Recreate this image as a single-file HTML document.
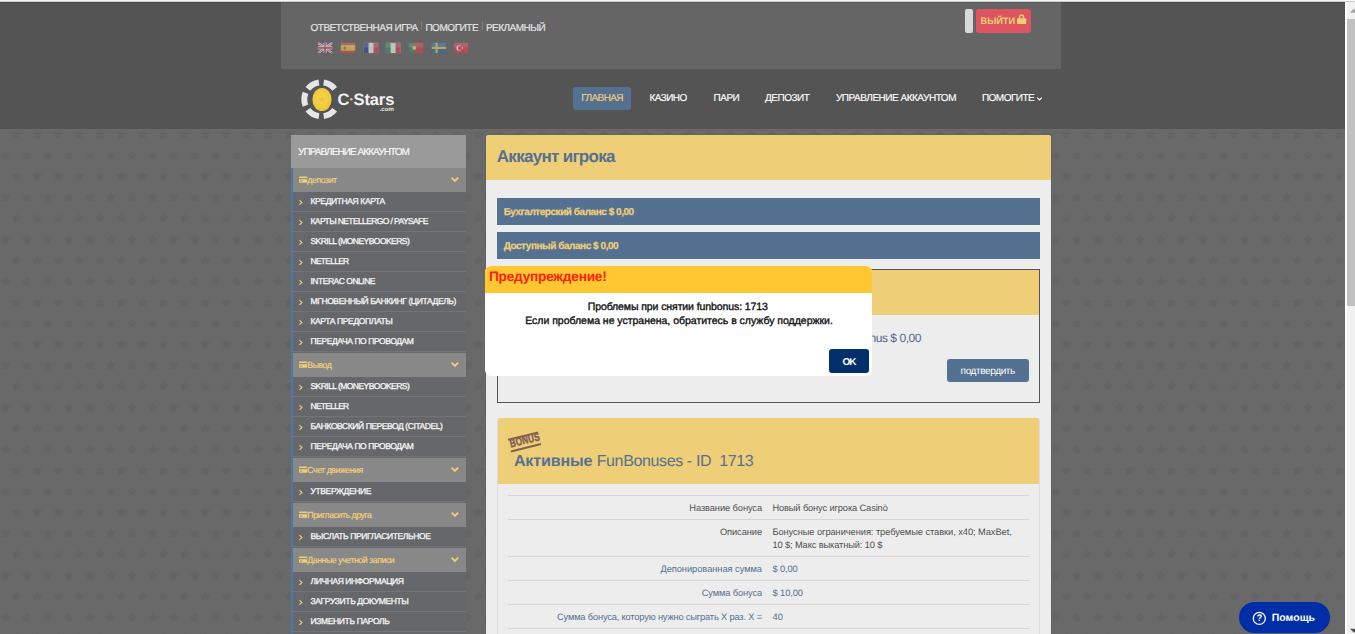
<!DOCTYPE html>
<html><head><meta charset="utf-8"><title>C-Stars</title>
<style>
html,body{margin:0;padding:0;}
body{width:1355px;height:634px;overflow:hidden;position:relative;background:#696969;font-family:'Liberation Sans',sans-serif;text-rendering:geometricPrecision;}
.b{position:absolute;}
.t{position:absolute;white-space:pre;}
</style></head><body>
<svg class="b" style="left:0;top:129px" width="1345" height="505" viewBox="0 129 1345 505"><defs><pattern id="st" x="5.8" y="-1.9" width="21" height="42" patternUnits="userSpaceOnUse"><polygon fill="#646464" points="10.50,4.50 12.20,8.15 16.21,8.65 13.26,11.40 14.03,15.35 10.50,13.40 6.97,15.35 7.74,11.40 4.79,8.65 8.80,8.15"/><polygon fill="#646464" points="0.00,25.50 1.70,29.15 5.71,29.65 2.76,32.40 3.53,36.35 0.00,34.40 -3.53,36.35 -2.76,32.40 -5.71,29.65 -1.70,29.15"/><polygon fill="#646464" points="21.00,25.50 22.70,29.15 26.71,29.65 23.76,32.40 24.53,36.35 21.00,34.40 17.47,36.35 18.24,32.40 15.29,29.65 19.30,29.15"/></pattern></defs><rect x="0" y="129" width="1345" height="505" fill="url(#st)"/></svg>
<!--BG-->
<div class="b" style="left:0px;top:2px;width:1345px;height:127px;background:#545454;"></div>
<div class="b" style="left:281px;top:2px;width:780px;height:67px;background:#656565;"></div>
<div class="b" style="left:421.4px;top:21px;width:1px;height:8.6px;background:#7e7e7e;"></div>
<div class="b" style="left:481.6px;top:21px;width:1px;height:8.6px;background:#7e7e7e;"></div>
<div class="b" style="left:965px;top:9px;width:8px;height:24px;background:#d9d9d9;border-radius:2px;"></div>
<div class="b" style="left:976px;top:9px;width:55px;height:24px;background:#de5562;border-radius:3px;"></div>
<div class="b" style="left:573px;top:87px;width:58px;height:23px;background:#547192;border-radius:3px;"></div>
<div class="b" style="left:291px;top:135px;width:175px;height:33px;background:#9a9a9a;"></div>
<div class="b" style="left:291px;top:168px;width:175px;height:24px;background:#888888;border-left:2px solid #4f77a6;box-sizing:border-box;"></div>
<div class="b" style="left:291px;top:192px;width:175px;height:20px;background:#65676b;border-left:2px solid #4f77a6;border-bottom:1px solid #72747a;box-sizing:border-box;"></div>
<div class="b" style="left:291px;top:212px;width:175px;height:20px;background:#65676b;border-left:2px solid #4f77a6;border-bottom:1px solid #72747a;box-sizing:border-box;"></div>
<div class="b" style="left:291px;top:232px;width:175px;height:20px;background:#65676b;border-left:2px solid #4f77a6;border-bottom:1px solid #72747a;box-sizing:border-box;"></div>
<div class="b" style="left:291px;top:252px;width:175px;height:20px;background:#65676b;border-left:2px solid #4f77a6;border-bottom:1px solid #72747a;box-sizing:border-box;"></div>
<div class="b" style="left:291px;top:272px;width:175px;height:20px;background:#65676b;border-left:2px solid #4f77a6;border-bottom:1px solid #72747a;box-sizing:border-box;"></div>
<div class="b" style="left:291px;top:292px;width:175px;height:20px;background:#65676b;border-left:2px solid #4f77a6;border-bottom:1px solid #72747a;box-sizing:border-box;"></div>
<div class="b" style="left:291px;top:312px;width:175px;height:20px;background:#65676b;border-left:2px solid #4f77a6;border-bottom:1px solid #72747a;box-sizing:border-box;"></div>
<div class="b" style="left:291px;top:332px;width:175px;height:20px;background:#65676b;border-left:2px solid #4f77a6;border-bottom:1px solid #72747a;box-sizing:border-box;"></div>
<div class="b" style="left:291px;top:353px;width:175px;height:24px;background:#888888;border-left:2px solid #4f77a6;box-sizing:border-box;"></div>
<div class="b" style="left:291px;top:377px;width:175px;height:20px;background:#65676b;border-left:2px solid #4f77a6;border-bottom:1px solid #72747a;box-sizing:border-box;"></div>
<div class="b" style="left:291px;top:397px;width:175px;height:20px;background:#65676b;border-left:2px solid #4f77a6;border-bottom:1px solid #72747a;box-sizing:border-box;"></div>
<div class="b" style="left:291px;top:417px;width:175px;height:20px;background:#65676b;border-left:2px solid #4f77a6;border-bottom:1px solid #72747a;box-sizing:border-box;"></div>
<div class="b" style="left:291px;top:437px;width:175px;height:20px;background:#65676b;border-left:2px solid #4f77a6;border-bottom:1px solid #72747a;box-sizing:border-box;"></div>
<div class="b" style="left:291px;top:458px;width:175px;height:24px;background:#888888;border-left:2px solid #4f77a6;box-sizing:border-box;"></div>
<div class="b" style="left:291px;top:482px;width:175px;height:20px;background:#65676b;border-left:2px solid #4f77a6;border-bottom:1px solid #72747a;box-sizing:border-box;"></div>
<div class="b" style="left:291px;top:503px;width:175px;height:24px;background:#888888;border-left:2px solid #4f77a6;box-sizing:border-box;"></div>
<div class="b" style="left:291px;top:527px;width:175px;height:20px;background:#65676b;border-left:2px solid #4f77a6;border-bottom:1px solid #72747a;box-sizing:border-box;"></div>
<div class="b" style="left:291px;top:548px;width:175px;height:24px;background:#888888;border-left:2px solid #4f77a6;box-sizing:border-box;"></div>
<div class="b" style="left:291px;top:572px;width:175px;height:20px;background:#65676b;border-left:2px solid #4f77a6;border-bottom:1px solid #72747a;box-sizing:border-box;"></div>
<div class="b" style="left:291px;top:592px;width:175px;height:20px;background:#65676b;border-left:2px solid #4f77a6;border-bottom:1px solid #72747a;box-sizing:border-box;"></div>
<div class="b" style="left:291px;top:612px;width:175px;height:20px;background:#65676b;border-left:2px solid #4f77a6;border-bottom:1px solid #72747a;box-sizing:border-box;"></div>
<div class="b" style="left:291px;top:632px;width:175px;height:20px;background:#65676b;border-left:2px solid #4f77a6;border-bottom:1px solid #72747a;box-sizing:border-box;"></div>
<div class="b" style="left:486px;top:135px;width:565px;height:520px;background:#ededed;border-radius:3px;box-shadow:0 0 0 1px rgba(0,0,0,0.06);"></div>
<div class="b" style="left:486px;top:135px;width:565px;height:45px;background:#efce78;border-radius:3px 3px 0 0;"></div>
<div class="b" style="left:497px;top:198px;width:543px;height:27px;background:#547192;"></div>
<div class="b" style="left:497px;top:232px;width:543px;height:27px;background:#547192;"></div>
<div class="b" style="left:497px;top:269px;width:543px;height:134px;background:#ededed;border:1px solid #555;box-sizing:border-box;"></div>
<div class="b" style="left:498px;top:270px;width:541px;height:45px;background:#efce78;"></div>
<div class="b" style="left:947px;top:359px;width:82px;height:23px;background:#547192;border-radius:3px;"></div>
<div class="b" style="left:497px;top:418px;width:543px;height:240px;background:#ededed;border:1px solid #dcdcdc;box-sizing:border-box;border-radius:3px;"></div>
<div class="b" style="left:498px;top:418px;width:541px;height:66px;background:#efce78;border-radius:3px 3px 0 0;"></div>
<div class="b" style="left:508px;top:495px;width:521px;height:1px;background:#d6d6d6;"></div>
<div class="b" style="left:508px;top:519px;width:521px;height:1px;background:#d6d6d6;"></div>
<div class="b" style="left:508px;top:556px;width:521px;height:1px;background:#d6d6d6;"></div>
<div class="b" style="left:508px;top:580px;width:521px;height:1px;background:#d6d6d6;"></div>
<div class="b" style="left:508px;top:604px;width:521px;height:1px;background:#d6d6d6;"></div>
<div class="b" style="left:508px;top:628px;width:521px;height:1px;background:#d6d6d6;"></div>
<div class="b" style="left:485px;top:266px;width:387px;height:110px;background:#ffffff;border-radius:6px;z-index:5;"></div>
<div class="b" style="left:485px;top:266px;width:387px;height:26.5px;background:#ffc832;border-radius:6px 6px 0 0;z-index:5;"></div>
<div class="b" style="left:829px;top:349px;width:40px;height:23.5px;background:#03306a;border-radius:3px;z-index:5;"></div>
<div class="b" style="left:1239px;top:602px;width:91px;height:31px;background:#002ea6;border-radius:16px;"></div>
<div class="b" style="left:1345px;top:0px;width:2px;height:634px;background:#ffffff;"></div>
<div class="b" style="left:1347px;top:0px;width:8px;height:634px;background:#f1f1f1;"></div>
<div class="b" style="left:1347px;top:19px;width:8px;height:287px;background:#c1c1c1;"></div>
<div class="b" style="left:0px;top:0px;width:1355px;height:1px;background:#f8f8f8;"></div>
<div class="b" style="left:0px;top:1px;width:1355px;height:1px;background:#cdcdcd;"></div>
<div class="b" style="left:0px;top:2px;width:1345px;height:1px;background:rgba(0,0,0,0.10);"></div>
<!--ICONS-->
<svg class="b" style="left:0;top:0" width="1355" height="634" viewBox="0 0 1355 634"><path d="M305.54 105.67 A17.00 17.00 0 0 1 305.54 92.93" fill="none" stroke="#e6e6e6" stroke-width="6"/><path d="M307.90 88.83 A17.00 17.00 0 0 1 318.93 82.47" fill="none" stroke="#e6e6e6" stroke-width="6"/><path d="M323.67 82.47 A17.00 17.00 0 0 1 334.70 88.83" fill="none" stroke="#e6e6e6" stroke-width="6"/><path d="M334.70 109.77 A17.00 17.00 0 0 1 323.67 116.13" fill="none" stroke="#e6e6e6" stroke-width="6"/><path d="M318.93 116.13 A17.00 17.00 0 0 1 307.90 109.77" fill="none" stroke="#e6e6e6" stroke-width="6"/><defs><radialGradient id="cg" cx="0.45" cy="0.45" r="0.6"><stop offset="0" stop-color="#f6d84a"/><stop offset="1" stop-color="#eec23a"/></radialGradient></defs><ellipse cx="322" cy="99.5" rx="9.6" ry="11.6" fill="url(#cg)"/><polygon points="322,95.6 322.9,98.3 325.7,98.3 323.4,100 324.3,102.7 322,101 319.7,102.7 320.6,100 318.3,98.3 321.1,98.3" fill="#e6b93a" opacity="0.75"/><circle cx="351.3" cy="99.2" r="1.3" fill="#efce4a"/><svg x="317.7" y="42.6" width="14.8" height="10.7" viewBox="0 0 16 11" preserveAspectRatio="none" opacity="0.6"><rect width="16" height="11" fill="#3a4a9a"/><path d="M0 0L16 11M16 0L0 11" stroke="#fff" stroke-width="2.4"/><path d="M0 0L16 11M16 0L0 11" stroke="#e0444f" stroke-width="0.9"/><path d="M8 0V11M0 5.5H16" stroke="#fff" stroke-width="3.4"/><path d="M8 0V11M0 5.5H16" stroke="#e0444f" stroke-width="1.8"/><rect width="16" height="5" fill="#fff" opacity="0.18"/></svg><svg x="340.6" y="42.6" width="14.8" height="10.7" viewBox="0 0 16 11" preserveAspectRatio="none" opacity="0.6"><rect width="16" height="11" fill="#dd4a4a"/><rect y="2.7" width="16" height="5.6" fill="#f5d63a"/><rect x="3.2" y="4" width="2.4" height="3" fill="#c8683a"/><rect width="16" height="5" fill="#fff" opacity="0.18"/></svg><svg x="363.6" y="42.6" width="14.8" height="10.7" viewBox="0 0 16 11" preserveAspectRatio="none" opacity="0.6"><rect width="16" height="11" fill="#fff"/><rect width="5.3" height="11" fill="#38449a"/><rect x="10.7" width="5.3" height="11" fill="#dd4455"/><rect width="16" height="5" fill="#fff" opacity="0.18"/></svg><svg x="385.7" y="42.6" width="14.8" height="10.7" viewBox="0 0 16 11" preserveAspectRatio="none" opacity="0.6"><rect width="16" height="11" fill="#fff"/><rect width="5.3" height="11" fill="#2f9a5a"/><rect x="10.7" width="5.3" height="11" fill="#dd4455"/><rect width="16" height="5" fill="#fff" opacity="0.18"/></svg><svg x="408.7" y="42.6" width="14.8" height="10.7" viewBox="0 0 16 11" preserveAspectRatio="none" opacity="0.6"><rect width="16" height="11" fill="#dd4048"/><rect width="6" height="11" fill="#2f9a5a"/><circle cx="6" cy="5.5" r="2.2" fill="#f0d24a"/><circle cx="6" cy="5.5" r="1.1" fill="#eee"/><rect width="16" height="5" fill="#fff" opacity="0.18"/></svg><svg x="431.5" y="42.6" width="14.8" height="10.7" viewBox="0 0 16 11" preserveAspectRatio="none" opacity="0.6"><rect width="16" height="11" fill="#2f6fb5"/><path d="M5.5 0V11M0 5.5H16" stroke="#f5d63a" stroke-width="2.2"/><rect width="16" height="5" fill="#fff" opacity="0.18"/></svg><svg x="453.5" y="42.6" width="14.8" height="10.7" viewBox="0 0 16 11" preserveAspectRatio="none" opacity="0.6"><rect width="16" height="11" fill="#e0404a"/><circle cx="6" cy="5.5" r="2.8" fill="#fff"/><circle cx="6.9" cy="5.5" r="2.2" fill="#e0404a"/><circle cx="9.6" cy="5.5" r="0.8" fill="#fff"/><rect width="16" height="5" fill="#fff" opacity="0.18"/></svg><rect x="1017" y="18.3" width="9.2" height="5.8" rx="0.8" fill="#efce6f"/><path d="M1019.7 18.6V16.8A1.9 1.9 0 0 1 1023.5 16.8V18.6" fill="none" stroke="#efce6f" stroke-width="1.5"/><path d="M1037.2 97.6L1039.5 100L1041.8 97.6" fill="none" stroke="#fff" stroke-width="1.1"/><g fill="#efce78"><rect x="299" y="176.6" width="8.3" height="6.2" rx="0.8"/></g><rect x="299" y="178.1" width="8.3" height="1.1" fill="#888"/><rect x="300" y="180.6" width="2.4" height="0.9" fill="#888"/><path d="M451.6 177.6L454.9 180.9L458.2 177.6" fill="none" stroke="#efce78" stroke-width="1.9" stroke-linejoin="miter"/><path d="M299.4 200.1L302 202.5L299.4 204.9" fill="none" stroke="#efce78" stroke-width="1.1"/><path d="M299.4 220.1L302 222.5L299.4 224.9" fill="none" stroke="#efce78" stroke-width="1.1"/><path d="M299.4 240.1L302 242.5L299.4 244.9" fill="none" stroke="#efce78" stroke-width="1.1"/><path d="M299.4 260.1L302 262.5L299.4 264.9" fill="none" stroke="#efce78" stroke-width="1.1"/><path d="M299.4 280.1L302 282.5L299.4 284.9" fill="none" stroke="#efce78" stroke-width="1.1"/><path d="M299.4 300.1L302 302.5L299.4 304.9" fill="none" stroke="#efce78" stroke-width="1.1"/><path d="M299.4 320.1L302 322.5L299.4 324.9" fill="none" stroke="#efce78" stroke-width="1.1"/><path d="M299.4 340.1L302 342.5L299.4 344.9" fill="none" stroke="#efce78" stroke-width="1.1"/><g fill="#efce78"><rect x="299" y="361.6" width="8.3" height="6.2" rx="0.8"/></g><rect x="299" y="363.1" width="8.3" height="1.1" fill="#888"/><rect x="300" y="365.6" width="2.4" height="0.9" fill="#888"/><path d="M451.6 362.6L454.9 365.9L458.2 362.6" fill="none" stroke="#efce78" stroke-width="1.9" stroke-linejoin="miter"/><path d="M299.4 385.1L302 387.5L299.4 389.9" fill="none" stroke="#efce78" stroke-width="1.1"/><path d="M299.4 405.1L302 407.5L299.4 409.9" fill="none" stroke="#efce78" stroke-width="1.1"/><path d="M299.4 425.1L302 427.5L299.4 429.9" fill="none" stroke="#efce78" stroke-width="1.1"/><path d="M299.4 445.1L302 447.5L299.4 449.9" fill="none" stroke="#efce78" stroke-width="1.1"/><g fill="#efce78"><rect x="299" y="466.6" width="8.3" height="6.2" rx="0.8"/></g><rect x="299" y="468.1" width="8.3" height="1.1" fill="#888"/><rect x="300" y="470.6" width="2.4" height="0.9" fill="#888"/><path d="M451.6 467.6L454.9 470.9L458.2 467.6" fill="none" stroke="#efce78" stroke-width="1.9" stroke-linejoin="miter"/><path d="M299.4 490.1L302 492.5L299.4 494.9" fill="none" stroke="#efce78" stroke-width="1.1"/><g fill="#efce78"><rect x="299" y="511.6" width="8.3" height="6.2" rx="0.8"/></g><rect x="299" y="513.1" width="8.3" height="1.1" fill="#888"/><rect x="300" y="515.6" width="2.4" height="0.9" fill="#888"/><path d="M451.6 512.6L454.9 515.9L458.2 512.6" fill="none" stroke="#efce78" stroke-width="1.9" stroke-linejoin="miter"/><path d="M299.4 535.1L302 537.5L299.4 539.9" fill="none" stroke="#efce78" stroke-width="1.1"/><g fill="#efce78"><rect x="299" y="556.6" width="8.3" height="6.2" rx="0.8"/></g><rect x="299" y="558.1" width="8.3" height="1.1" fill="#888"/><rect x="300" y="560.6" width="2.4" height="0.9" fill="#888"/><path d="M451.6 557.6L454.9 560.9L458.2 557.6" fill="none" stroke="#efce78" stroke-width="1.9" stroke-linejoin="miter"/><path d="M299.4 580.1L302 582.5L299.4 584.9" fill="none" stroke="#efce78" stroke-width="1.1"/><path d="M299.4 600.1L302 602.5L299.4 604.9" fill="none" stroke="#efce78" stroke-width="1.1"/><path d="M299.4 620.1L302 622.5L299.4 624.9" fill="none" stroke="#efce78" stroke-width="1.1"/><path d="M299.4 640.1L302 642.5L299.4 644.9" fill="none" stroke="#efce78" stroke-width="1.1"/><circle cx="1259.3" cy="618.4" r="6" fill="none" stroke="#fff" stroke-width="1.3"/><polygon points="1350,12.8 1354,8.5 1358,12.8" fill="#a3a3a3"/><polygon points="1350,628.8 1358,628.8 1354,632.8" fill="#505050"/></svg>
<div class="b" style="left:509.4px;top:435.4px;width:30.5px;height:13.6px;transform:rotate(-13.8deg);border-top:2px solid #7b5751;border-bottom:2px solid #7b5751;box-sizing:border-box;opacity:.92"><span style="position:absolute;left:-5.2px;top:-1px;width:41px;text-align:center;color:#7b5751;font-size:11.5px;line-height:11px;font-weight:bold;letter-spacing:0.2px;transform:scaleX(0.72);-webkit-text-stroke:0.5px #7b5751">BONUS</span></div>
<span class="t" style="left:1256.4px;top:612.5px;font-size:9.5px;line-height:11px;font-weight:bold;color:#fff">?</span>
<span class="t" style="top:19.000px;font-size:10px;line-height:20px;color:#e6e6e6;letter-spacing:-0.487px;left:310.50px;-webkit-text-stroke:0.15px #e6e6e6;">ОТВЕТСТВЕННАЯ ИГРА</span>
<span class="t" style="top:19.000px;font-size:10px;line-height:20px;color:#e6e6e6;letter-spacing:-0.459px;left:425.40px;-webkit-text-stroke:0.15px #e6e6e6;">ПОМОГИТЕ</span>
<span class="t" style="top:19.000px;font-size:10px;line-height:20px;color:#e6e6e6;letter-spacing:-0.511px;left:485.90px;-webkit-text-stroke:0.15px #e6e6e6;">РЕКЛАМНЫЙ</span>
<span class="t" style="top:11.000px;font-size:9.3px;line-height:20px;color:#efce6f;font-weight:bold;letter-spacing:-0.072px;left:980.50px;">ВЫЙТИ</span>
<span class="t" style="top:89.000px;font-size:10px;line-height:20px;color:#efce78;letter-spacing:-0.596px;left:581.30px;-webkit-text-stroke:0.15px #efce78;">ГЛАВНАЯ</span>
<span class="t" style="top:89.000px;font-size:10px;line-height:20px;color:#fff;letter-spacing:-0.538px;left:649.40px;-webkit-text-stroke:0.15px #fff;">КАЗИНО</span>
<span class="t" style="top:89.000px;font-size:10px;line-height:20px;color:#fff;letter-spacing:-0.530px;left:713.60px;-webkit-text-stroke:0.15px #fff;">ПАРИ</span>
<span class="t" style="top:89.000px;font-size:10px;line-height:20px;color:#fff;letter-spacing:-0.493px;left:765.10px;-webkit-text-stroke:0.15px #fff;">ДЕПОЗИТ</span>
<span class="t" style="top:89.000px;font-size:10px;line-height:20px;color:#fff;letter-spacing:-0.488px;left:836.00px;-webkit-text-stroke:0.15px #fff;">УПРАВЛЕНИЕ АККАУНТОМ</span>
<span class="t" style="top:89.000px;font-size:10px;line-height:20px;color:#fff;letter-spacing:-0.509px;left:981.90px;-webkit-text-stroke:0.15px #fff;">ПОМОГИТЕ</span>
<span class="t" style="top:90.000px;font-size:16.5px;line-height:20px;color:#f2f2f2;font-weight:bold;left:337.50px;">C</span>
<span class="t" style="top:90.000px;font-size:16.5px;line-height:20px;color:#f2f2f2;font-weight:bold;letter-spacing:-0.136px;left:353.60px;">Stars</span>
<span class="t" style="top:100.000px;font-size:6px;line-height:20px;color:#e8e8e8;font-weight:bold;letter-spacing:0.146px;left:379.40px;">.com</span>
<span class="t" style="top:143.000px;font-size:10px;line-height:20px;color:#f8f8f8;letter-spacing:-0.938px;left:298.00px;-webkit-text-stroke:0.2px #f8f8f8;">УПРАВЛЕНИЕ АККАУНТОМ</span>
<span class="t" style="top:170.000px;font-size:8.8px;line-height:20px;color:#efce78;letter-spacing:-0.452px;left:307.30px;-webkit-text-stroke:0.2px #efce78;">депозит</span>
<span class="t" style="top:191.000px;font-size:8.5px;line-height:20px;color:#f6f6f6;letter-spacing:-0.384px;left:310.50px;-webkit-text-stroke:0.3px #f6f6f6;">КРЕДИТНАЯ КАРТА</span>
<span class="t" style="top:211.000px;font-size:8.5px;line-height:20px;color:#f6f6f6;letter-spacing:-0.615px;left:310.50px;-webkit-text-stroke:0.3px #f6f6f6;">КАРТЫ NETELLERGO / PAYSAFE</span>
<span class="t" style="top:231.000px;font-size:8.5px;line-height:20px;color:#f6f6f6;letter-spacing:-0.549px;left:310.50px;-webkit-text-stroke:0.3px #f6f6f6;">SKRILL (MONEYBOOKERS)</span>
<span class="t" style="top:251.000px;font-size:8.5px;line-height:20px;color:#f6f6f6;letter-spacing:-0.742px;left:310.50px;-webkit-text-stroke:0.3px #f6f6f6;">NETELLER</span>
<span class="t" style="top:271.000px;font-size:8.5px;line-height:20px;color:#f6f6f6;letter-spacing:-0.488px;left:310.50px;-webkit-text-stroke:0.3px #f6f6f6;">INTERAC ONLINE</span>
<span class="t" style="top:291.000px;font-size:8.5px;line-height:20px;color:#f6f6f6;letter-spacing:-0.394px;left:310.50px;-webkit-text-stroke:0.3px #f6f6f6;">МГНОВЕННЫЙ БАНКИНГ (ЦИТАДЕЛЬ)</span>
<span class="t" style="top:311.000px;font-size:8.5px;line-height:20px;color:#f6f6f6;letter-spacing:-0.380px;left:310.50px;-webkit-text-stroke:0.3px #f6f6f6;">КАРТА ПРЕДОПЛАТЫ</span>
<span class="t" style="top:331.000px;font-size:8.5px;line-height:20px;color:#f6f6f6;letter-spacing:-0.409px;left:310.50px;-webkit-text-stroke:0.3px #f6f6f6;">ПЕРЕДАЧА ПО ПРОВОДАМ</span>
<span class="t" style="top:355.000px;font-size:8.8px;line-height:20px;color:#efce78;letter-spacing:-0.502px;left:307.30px;-webkit-text-stroke:0.2px #efce78;">Вывод</span>
<span class="t" style="top:376.000px;font-size:8.5px;line-height:20px;color:#f6f6f6;letter-spacing:-0.549px;left:310.50px;-webkit-text-stroke:0.3px #f6f6f6;">SKRILL (MONEYBOOKERS)</span>
<span class="t" style="top:396.000px;font-size:8.5px;line-height:20px;color:#f6f6f6;letter-spacing:-0.742px;left:310.50px;-webkit-text-stroke:0.3px #f6f6f6;">NETELLER</span>
<span class="t" style="top:416.000px;font-size:8.5px;line-height:20px;color:#f6f6f6;letter-spacing:-0.418px;left:310.50px;-webkit-text-stroke:0.3px #f6f6f6;">БАНКОВСКИЙ ПЕРЕВОД (CITADEL)</span>
<span class="t" style="top:436.000px;font-size:8.5px;line-height:20px;color:#f6f6f6;letter-spacing:-0.409px;left:310.50px;-webkit-text-stroke:0.3px #f6f6f6;">ПЕРЕДАЧА ПО ПРОВОДАМ</span>
<span class="t" style="top:460.000px;font-size:8.8px;line-height:20px;color:#efce78;letter-spacing:-0.496px;left:307.30px;-webkit-text-stroke:0.2px #efce78;">Счет движения</span>
<span class="t" style="top:481.000px;font-size:8.5px;line-height:20px;color:#f6f6f6;letter-spacing:-0.382px;left:310.50px;-webkit-text-stroke:0.3px #f6f6f6;">УТВЕРЖДЕНИЕ</span>
<span class="t" style="top:505.000px;font-size:8.8px;line-height:20px;color:#efce78;letter-spacing:-0.486px;left:307.30px;-webkit-text-stroke:0.2px #efce78;">Пригласить друга</span>
<span class="t" style="top:526.000px;font-size:8.5px;line-height:20px;color:#f6f6f6;letter-spacing:-0.371px;left:310.50px;-webkit-text-stroke:0.3px #f6f6f6;">ВЫСЛАТЬ ПРИГЛАСИТЕЛЬНОЕ</span>
<span class="t" style="top:550.000px;font-size:8.8px;line-height:20px;color:#efce78;letter-spacing:-0.470px;left:307.30px;-webkit-text-stroke:0.2px #efce78;">Данные учетной записи</span>
<span class="t" style="top:571.000px;font-size:8.5px;line-height:20px;color:#f6f6f6;letter-spacing:-0.403px;left:310.50px;-webkit-text-stroke:0.3px #f6f6f6;">ЛИЧНАЯ ИНФОРМАЦИЯ</span>
<span class="t" style="top:591.000px;font-size:8.5px;line-height:20px;color:#f6f6f6;letter-spacing:-0.363px;left:310.50px;-webkit-text-stroke:0.3px #f6f6f6;">ЗАГРУЗИТЬ ДОКУМЕНТЫ</span>
<span class="t" style="top:611.000px;font-size:8.5px;line-height:20px;color:#f6f6f6;letter-spacing:-0.354px;left:310.50px;-webkit-text-stroke:0.3px #f6f6f6;">ИЗМЕНИТЬ ПАРОЛЬ</span>
<span class="t" style="top:631.000px;font-size:8.5px;line-height:20px;color:#f6f6f6;letter-spacing:-0.188px;left:310.50px;-webkit-text-stroke:0.3px #f6f6f6;">ИСТОРИЯ</span>
<span class="t" style="top:147.000px;font-size:17px;line-height:20px;color:#547192;font-weight:bold;letter-spacing:-0.700px;left:496.80px;">Аккаунт игрока</span>
<span class="t" style="top:203.000px;font-size:10px;line-height:20px;color:#efce78;font-weight:bold;letter-spacing:-0.460px;left:503.70px;-webkit-text-stroke:0.25px #efce78;">Бухгалтерский баланс $ 0,00</span>
<span class="t" style="top:237.000px;font-size:10px;line-height:20px;color:#efce78;font-weight:bold;letter-spacing:-0.451px;left:503.70px;-webkit-text-stroke:0.25px #efce78;">Доступный баланс $ 0,00</span>
<span class="t" style="top:328.000px;font-size:12px;line-height:20px;color:#4f6888;left:776.73px;letter-spacing:-0.46px;">Доступный FunBonus $ 0,00</span>
<span class="t" style="top:362.000px;font-size:10px;line-height:20px;color:#fff;letter-spacing:-0.380px;left:960.60px;">подтвердить</span>
<span class="t" style="top:452.000px;font-size:16px;line-height:20px;color:#547192;font-weight:bold;letter-spacing:-0.112px;left:513.90px;">Активные</span>
<span class="t" style="top:452.000px;font-size:16px;line-height:20px;color:#547192;letter-spacing:-0.374px;left:596.70px;">FunBonuses - ID  1713</span>
<span class="t" style="top:498.000px;font-size:9.3px;line-height:20px;color:#505050;letter-spacing:-0.095px;left:689.30px;">Название бонуса</span>
<span class="t" style="top:498.000px;font-size:9.3px;line-height:20px;color:#505050;letter-spacing:-0.131px;left:772.40px;">Новый бонус игрока Casinò</span>
<span class="t" style="top:522.000px;font-size:9.3px;line-height:20px;color:#505050;letter-spacing:-0.085px;left:719.90px;">Описание</span>
<span class="t" style="top:522.000px;font-size:9.3px;line-height:20px;color:#505050;letter-spacing:-0.065px;left:772.40px;">Бонусные ограничения: требуемые ставки, x40; MaxBet,</span>
<span class="t" style="top:535.000px;font-size:9.3px;line-height:20px;color:#505050;letter-spacing:-0.127px;left:772.40px;">10 $; Макс выкатный: 10 $</span>
<span class="t" style="top:559.000px;font-size:9.3px;line-height:20px;color:#547192;letter-spacing:-0.048px;left:660.40px;">Депонированная сумма</span>
<span class="t" style="top:559.000px;font-size:9.3px;line-height:20px;color:#547192;letter-spacing:-0.110px;left:772.40px;">$ 0,00</span>
<span class="t" style="top:583.000px;font-size:9.3px;line-height:20px;color:#547192;letter-spacing:-0.125px;left:701.70px;">Сумма бонуса</span>
<span class="t" style="top:583.000px;font-size:9.3px;line-height:20px;color:#547192;letter-spacing:-0.062px;left:772.40px;">$ 10,00</span>
<span class="t" style="top:607.000px;font-size:9.3px;line-height:20px;color:#547192;letter-spacing:-0.172px;left:557.00px;">Сумма бонуса, которую нужно сыграть X раз. X =</span>
<span class="t" style="top:607.000px;font-size:9.3px;line-height:20px;color:#547192;letter-spacing:0.178px;left:772.40px;">40</span>
<span class="t" style="top:267.000px;font-size:13.7px;line-height:20px;color:#fb1f08;font-weight:bold;letter-spacing:-0.247px;left:489.00px;z-index:6;">Предупреждение!</span>
<span class="t" style="top:297.000px;font-size:10.5px;line-height:20px;color:#111;letter-spacing:-0.095px;left:587.70px;z-index:6;-webkit-text-stroke:0.35px #111;">Проблемы при снятии funbonus: 1713</span>
<span class="t" style="top:311.000px;font-size:10.5px;line-height:20px;color:#111;letter-spacing:-0.016px;left:525.20px;z-index:6;-webkit-text-stroke:0.35px #111;">Если проблема не устранена, обратитесь в службу поддержки.</span>
<span class="t" style="top:353.000px;font-size:10px;line-height:20px;color:#fff;font-weight:bold;letter-spacing:-1.000px;left:842.50px;z-index:6;">OK</span>
<span class="t" style="top:608.000px;font-size:10.5px;line-height:20px;color:#fff;font-weight:bold;letter-spacing:0.035px;left:1271.70px;">Помощь</span>
</body></html>
